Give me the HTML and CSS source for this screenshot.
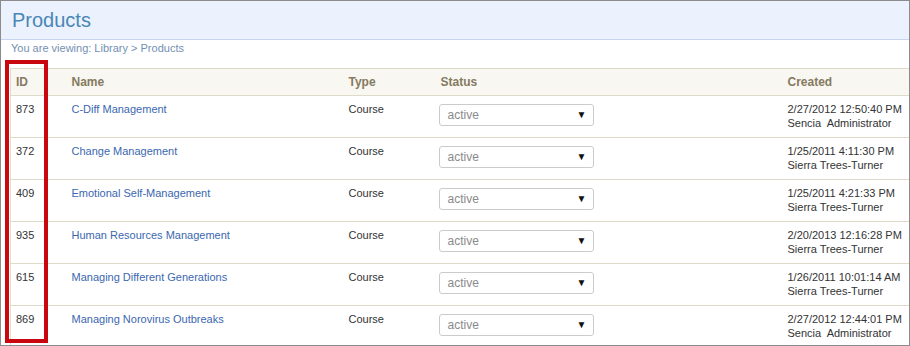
FILE: index.html
```html
<!DOCTYPE html>
<html lang="en">
<head>
    <meta charset="UTF-8">
    <title>Products</title>
    <link rel="stylesheet" href="styles.css">
</head>
<body>

<div class="frame">
    <div class="page-head">
        <h1>Products</h1>
    </div>
    <div class="crumbs">You are viewing: Library &gt; Products</div>

    <table class="products">
        <colgroup>
            <col class="c-id"><col class="c-name"><col class="c-type"><col class="c-status"><col class="c-created">
        </colgroup>
        <thead>
            <tr><th>ID</th><th>Name</th><th>Type</th><th>Status</th><th>Created</th></tr>
        </thead>
        <tbody>
            <tr>
                <td>873</td><td><a href="#">C-Diff Management</a></td><td>Course</td>
                <td><div class="status">active<span class="arrow">&#9660;</span></div></td>
                <td>2/27/2012 12:50:40 PM<br>Sencia&nbsp; Administrator</td>
            </tr>
            <tr>
                <td>372</td><td><a href="#">Change Management</a></td><td>Course</td>
                <td><div class="status">active<span class="arrow">&#9660;</span></div></td>
                <td>1/25/2011 4:11:30 PM<br>Sierra Trees-Turner</td>
            </tr>
            <tr>
                <td>409</td><td><a href="#">Emotional Self-Management</a></td><td>Course</td>
                <td><div class="status">active<span class="arrow">&#9660;</span></div></td>
                <td>1/25/2011 4:21:33 PM<br>Sierra Trees-Turner</td>
            </tr>
            <tr>
                <td>935</td><td><a href="#">Human Resources Management</a></td><td>Course</td>
                <td><div class="status">active<span class="arrow">&#9660;</span></div></td>
                <td>2/20/2013 12:16:28 PM<br>Sierra Trees-Turner</td>
            </tr>
            <tr>
                <td>615</td><td><a href="#">Managing Different Generations</a></td><td>Course</td>
                <td><div class="status">active<span class="arrow">&#9660;</span></div></td>
                <td>1/26/2011 10:01:14 AM<br>Sierra Trees-Turner</td>
            </tr>
            <tr>
                <td>869</td><td><a href="#">Managing Norovirus Outbreaks</a></td><td>Course</td>
                <td><div class="status">active<span class="arrow">&#9660;</span></div></td>
                <td>2/27/2012 12:44:01 PM<br>Sencia&nbsp; Administrator</td>
            </tr>
        </tbody>
    </table>

    <!-- rámik okolo stĺpca ID -->
    <div class="highlight"></div>
</div>

</body>
</html>
```

FILE: styles.css
```css
body {
    margin: 0;
    padding: 0;
    font-family: "Liberation Sans", Arial, sans-serif;
    background: #fff;
}
.frame {
    position: relative;
    width: 908px;
    height: 344px;
    border: 1px solid #8c8c8c;
    overflow: hidden;
}
.page-head {
    height: 38px;
    background-color: #ebf2fd;
    border-bottom: 1px solid #c9d5ee;
    padding-left: 11px;
}
.page-head h1 {
    margin: 0;
    font-size: 20px;
    font-weight: normal;
    line-height: 38px;
    color: #4a86b6;
}
.crumbs {
    font-size: 11px;
    color: #7390b2;
    padding: 1px 0 0 10px;
    height: 27px;
    line-height: 14px;
}
.products {
    margin-left: 9px;
    width: 899px;
    border-collapse: collapse;
    table-layout: fixed;
    font-size: 11px;
    color: #333;
}
.c-id { width: 56px; }
.c-name { width: 277px; }
.c-type { width: 92px; }
.c-status { width: 347px; }
.c-created { width: 127px; }
.products thead tr {
    background-color: #f8f7f2;
}
.products th {
    height: 26px;
    padding: 0 0 0 5px;
    text-align: left;
    font-size: 12px;
    font-weight: bold;
    color: #857a60;
    border-top: 1px solid #dedbc9;
    border-bottom: 1px solid #dedbc9;
}
.products th:first-child,
.products td:first-child {
    border-left: 1px solid #dedbc9;
}
.products td {
    height: 42px;
    padding: 6px 0 0 5px;
    vertical-align: top;
    line-height: 14px;
    border-bottom: 1px solid #dedbc9;
    box-sizing: border-box;
}
.products a {
    color: #3b67b0;
    text-decoration: none;
}
.status {
    position: relative;
    width: 145px;
    height: 20px;
    margin: 2px 0 0 -2px;
    padding-left: 8px;
    border: 1px solid #cbcbcb;
    border-radius: 3px;
    font-size: 12px;
    line-height: 20px;
    color: #8a8a8a;
}
.arrow {
    position: absolute;
    right: 6px;
    top: 0;
    font-size: 10px;
    color: #111;
}
.highlight {
    position: absolute;
    left: 4px;
    top: 59px;
    width: 35px;
    height: 275px;
    border: 4px solid #c8070e;
}
```
